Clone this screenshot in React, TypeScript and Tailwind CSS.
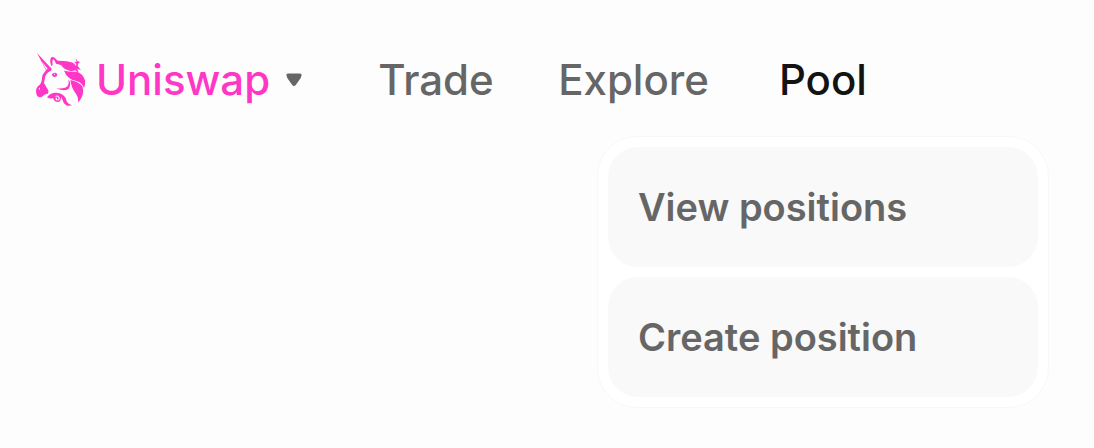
const poolLinks = [
  { label: "View positions", href: "#positions" },
  { label: "Create position", href: "#create" },
];

function UnicornLogo() {
  return (
    <svg viewBox="30 27 150 159" className="h-[53px] w-[50px] shrink-0" fill="#ff37c7" aria-hidden="true">
      {/* horn and face */}
      <path d="M33 27 L77 74 L75 80 Q65 84 62 90 Q56 96 56 106 Q55 112 54 117 Q60 128 66 137 Q69 145 65 149 Q55 150 50 157 Q42 163 34 156 Q28 146 31 134 Q34 127 41 122 Q47 117 48 103 Q49 90 56 84 L60 79 Z" />
      <path d="M47 52 L65 74 L61 77 Z" fill="#fdfdfd" />
      <path d="M40 131 Q37 134 39 138 Q42 136 42 131 Z" fill="#fdfdfd" />
      {/* ear */}
      <path d="M76 67 Q69 47 76 40 Q83 35 95 51 Q108 55 117 68 Q102 60 90 59 Q87 50 82 46 Q78 49 80 62 Z" />
      <path d="M77 92 Q82 84 91 87 Q96 92 92 97 Q82 102 77 92 Z" />
      <path d="M84 90 Q86 89 88 90 Q86 92 87 93 Q84 93 84 90 Z" fill="#fdfdfd" />
      {/* mane */}
      <path d="M90 50 Q122 49 141 56 Q147 60 149 66 L151 60 L144 53 L152 54 L149 42 L155 52 L163 54 L157 58 L155 65 L165 79 L154 74 L159 87 L148 79 Q140 82 130 80 Q114 77 106 64 Z" />
      <path d="M114 80 Q132 84 152 83 Q171 88 177 109 Q179 121 174 133 Q170 118 154 112 Q124 107 114 80 Z" />
      <path d="M133 108 Q157 112 169 127 Q178 150 157 176 Q157 156 146 144 Q136 130 133 108 Z" />
      {/* jaw */}
      <path d="M127 106 Q138 121 128 134 Q116 144 90 133 Q115 136 124 127 Q130 120 127 106 Z" />
      {/* beard */}
      <path
        fillRule="evenodd"
        d="M63 160 Q76 144 96 147 Q110 149 119 162 Q122 180 138 184 Q121 189 113 176 Q108 163 105 159 Q106 171 97 174 Q85 175 81 162 Q72 166 63 160 Z M91 159 Q87 163 90 168 Q96 172 101 166 Q103 159 96 155 Q91 154 87 157 Z"
      />
      <path d="M89 158 Q96 157 98 162 Q98 167 93 167 Q95 163 89 158 Z" />
    </svg>
  );
}

function CaretIcon() {
  return (
    <svg viewBox="0 0 16 14" className="h-3.5 w-4" fill="#666" aria-hidden="true">
      <path d="M2 0.5 H14 Q16 0.5 15.5 2.5 L14.7 5 L9.8 12 Q8 14 6.2 12 L1.3 5 L0.5 2.5 Q0 0.5 2 0.5 Z" />
    </svg>
  );
}

function PoolMenu() {
  return (
    <div className="absolute top-full left-1/2 mt-8 flex w-[452px] -translate-x-1/2 flex-col gap-2.5 rounded-[40px] border border-[#f8f8f8] bg-white p-2.5 text-[38px]/12 font-semibold text-[#666]">
      {poolLinks.map((link) => (
        <a key={link.label} href={link.href} className="rounded-[30px] bg-[#f9f9f9] px-[30px] py-9">
          {link.label}
        </a>
      ))}
    </div>
  );
}

export default function App() {
  return (
    <div className="min-h-screen bg-[#fdfdfd] font-['Inter','Liberation_Sans',sans-serif]">
      <header className="flex items-center px-9 pt-[53px] text-[42px]/12 font-medium text-[#666]">
        <button type="button" className="flex items-center text-[#ff37c7]">
          <UnicornLogo />
          <span className="mr-4 ml-2.5">Uniswap</span>
          <CaretIcon />
        </button>
        <nav className="ml-[76px] flex gap-[70px]">
          <a href="#trade" className="w-[110px]">Trade</a>
          <a href="#explore">Explore</a>
          <div className="relative">
            <a href="#pool" className="text-[#131313]">Pool</a>
            <PoolMenu />
          </div>
        </nav>
      </header>
    </div>
  );
}
